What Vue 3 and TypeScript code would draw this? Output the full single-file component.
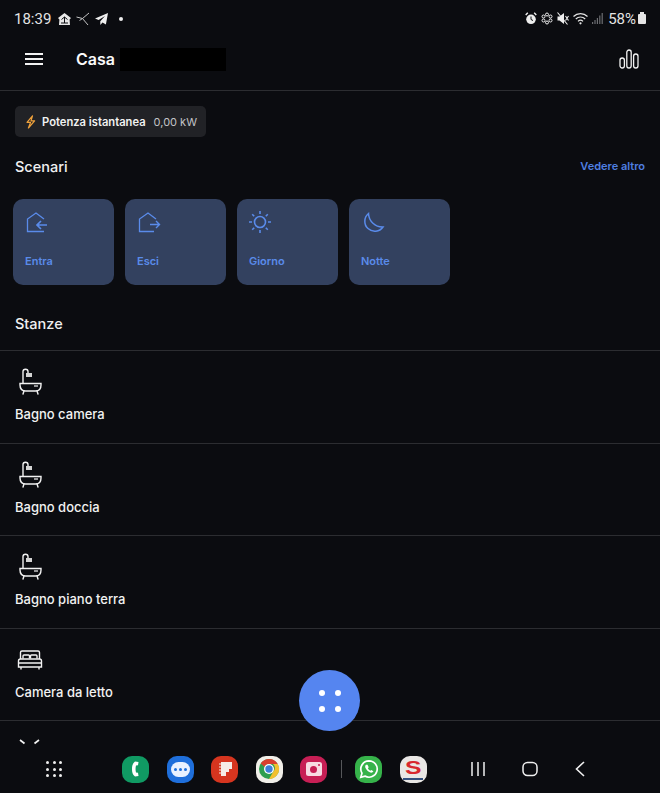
<script setup lang="ts">
const scenes: { label: string; icon: string }[] = [
  { label: 'Entra', icon: 'in' },
  { label: 'Esci', icon: 'out' },
  { label: 'Giorno', icon: 'sun' },
  { label: 'Notte', icon: 'moon' },
]
const rooms: { label: string; icon: string }[] = [
  { label: 'Bagno camera', icon: 'bath' },
  { label: 'Bagno doccia', icon: 'bath' },
  { label: 'Bagno piano terra', icon: 'bath' },
  { label: 'Camera da letto', icon: 'bed' },
  { label: '', icon: 'next' },
]
</script>

<template>
  <div class="screen">
    <div class="status">
      <div class="status-left">
        <span class="time">18:39</span>
        <svg class="si" width="15" height="14" viewBox="0 0 15 14"><path d="M7.500 1 14 6 12.600 7.500 13 13H2L2.400 7.500 1 6z" fill="#e8e8e8"/><path d="M4.500 7.500 7.500 5l3 2.500M4 11h7M7.500 5v6" stroke="#0b0c10" stroke-width="1" fill="none"/></svg>
        <svg class="si" width="14" height="14" viewBox="0 0 14 14" fill="none" stroke="#c4c4c4" stroke-width="1"><path d="M0.500 5 6.500 6.500 3.500 8.500M13 1 6.500 6.500 12 13"/></svg>
        <svg class="si" width="15" height="14" viewBox="0 0 15 14"><path d="M14 1 1 6.500l3.600 1.500L11 4 6.300 9.300V13l2.200-2.500 3.400 2z" fill="#efefef"/></svg>
        <span class="dot"></span>
      </div>
      <div class="status-right">
        <svg width="12" height="13" viewBox="0 0 12 13"><circle cx="6" cy="7.300" r="4.800" fill="#eee"/><path d="M.7 3 2.800.8M11.300 3 9.200.8" stroke="#eee" stroke-width="1.400"/><path d="M6 4.500V7.500l2 1" stroke="#0b0c10" stroke-width="1" fill="none"/></svg>
        <svg width="12" height="13" viewBox="0 0 12 13" fill="none" stroke="#eee"><circle cx="6" cy="2.500" r="1.500"/><circle cx="6" cy="10.500" r="1.500"/><circle cx="2.500" cy="4.500" r="1.500"/><circle cx="9.500" cy="4.500" r="1.500"/><circle cx="2.500" cy="8.500" r="1.500"/><circle cx="9.500" cy="8.500" r="1.500"/></svg>
        <svg width="12" height="13" viewBox="0 0 12 13"><path d="M.5 4.500h2L7 1v11L2.500 8.500h-2z" fill="#eee"/><path d="M8.500 4l3 4.500M11.500 4l-3 4.500M.5.500l10 12" stroke="#eee" stroke-width="1.100" fill="none"/></svg>
        <svg class="wifi" width="15" height="13" viewBox="0 0 15 13" fill="none" stroke="#e6e6e6" stroke-width="1.200"><path d="M.5 4.500C4.300.7 10.700.7 14.500 4.500M2.800 7C5.500 4.300 9.500 4.300 12.200 7M5 9.300c1.500-1.500 3.500-1.500 5 0"/><circle cx="7.500" cy="11.300" r="1.100" fill="#e6e6e6" stroke="none"/></svg>
        <svg class="signal" width="11" height="11" viewBox="0 0 11 11" fill="#6d6e72"><rect x="0" y="9" width="1.200" height="2"/><rect x="2.400" y="7" width="1.200" height="4"/><rect x="4.800" y="5" width="1.200" height="6"/><rect x="7.200" y="2.500" width="1.200" height="8.500"/><rect x="9.600" y="0" width="1.200" height="11"/></svg>
        <span class="pct">58%</span>
        <span class="batt"></span>
      </div>
    </div>

    <header class="topbar">
      <div class="burger"><i></i><i></i><i></i></div>
      <h1 class="home">Casa</h1>
      <div class="redact"></div>
      <svg class="chart" width="20" height="20" viewBox="0 0 20 20" fill="none" stroke="#f2f2f2" stroke-width="1.300"><rect x="1" y="9" width="4.400" height="10" rx="2.200"/><rect x="7.800" y="1" width="4.400" height="18" rx="2.200"/><rect x="14.600" y="5" width="4.400" height="14" rx="2.200"/></svg>
    </header>

    <main class="content">
      <div class="chip">
        <svg class="bolt" width="11" height="14" viewBox="0 0 11 14"><path d="M7.500.8 2 7.400h3.600L3.400 13 9.600 5.800H6z" fill="none" stroke="#f0a23c" stroke-width="1.200" stroke-linejoin="round"/></svg>
        <span class="chip-name">Potenza istantanea</span>
        <span class="chip-value">0,00 kW</span>
      </div>

      <div class="section-head">
        <h2>Scenari</h2>
        <span class="more">Vedere altro</span>
      </div>

      <div class="scenes">
        <div v-for="s in scenes" :key="s.label" class="scene">
          <svg class="scene-icon" width="26" height="26" viewBox="0 0 26 26" fill="none" stroke="#5a8bea" stroke-width="1.300">
            <template v-if="s.icon === 'in'">
              <path d="M20 9 12 3 3.500 9V21.500H20"/>
              <path d="M23 15H13M17 11l-4 4 4 4" stroke-width="1.700"/>
            </template>
            <template v-else-if="s.icon === 'out'">
              <path d="M20 9 12 3 3.500 9V21.500H18"/>
              <path d="M14 14.500h9.500M20 11l3.500 3.500L20 18" stroke-width="1.400"/>
            </template>
            <template v-else-if="s.icon === 'sun'">
              <circle cx="12" cy="12" r="5.500" stroke-width="1.600"/>
              <path d="M12 1v3M12 20v3M1 12h3M20 12h3M4.200 4.200l2 2M17.800 17.800l2 2M19.800 4.200l-2 2M6.200 17.800l-2 2" stroke-width="1.600"/>
            </template>
            <template v-else>
              <path d="M8.500 3.500A10 10 0 1 0 23 17 14 14 0 0 1 8.500 3.500z" stroke-width="1.500"/>
            </template>
          </svg>
          <span class="scene-label">{{ s.label }}</span>
        </div>
      </div>

      <h2 class="rooms-title">Stanze</h2>

      <div class="rooms">
        <div v-for="(r, i) in rooms" :key="i" class="room">
          <svg class="room-icon" width="28" height="27" viewBox="0 0 28 27" fill="none" stroke="#f2f2f2" stroke-width="1.400">
            <template v-if="r.icon === 'bath'">
              <path d="M6 15V3.500C6 2 7 1.300 8.500 1.300S11 2 11 3.500V5"/>
              <path d="M9 5h6v4H9z" fill="#d4d4d4" stroke="none"/>
              <path d="M3 15.500h21v1.500c0 4-2.500 6-5.500 6h-10C5.500 23 3 21 3 17z"/>
              <path d="M7 23l-1 3M20 23l1 3" stroke-linecap="round"/>
              <path d="M17 18h4" stroke-width="1.200"/>
            </template>
            <template v-else-if="r.icon === 'bed'">
              <path d="M3.500 13V6.500c0-1 .6-1.500 1.500-1.500h16c.9 0 1.500.5 1.500 1.500V13"/>
              <path d="M6 12.500V10c0-.6.4-1 1-1h4.500c.6 0 1 .4 1 1v2.500M13.500 12.500V10c0-.6.4-1 1-1H19c.6 0 1 .4 1 1v2.500"/>
              <path d="M1.500 21v-6c0-1.300.7-2 2-2h19c1.300 0 2 .7 2 2v6zM1.500 17h23M4 21v2.500M22 21v2.500"/>
            </template>
            <template v-else>
              <path d="M3 2l4.500 3.500M22 2l-4.500 3.500" stroke-width="1.700"/>
            </template>
          </svg>
          <span class="room-label">{{ r.label }}</span>
        </div>
      </div>
    </main>

    <button class="fab" type="button" aria-label="Menu">
      <i></i><i></i><i></i><i></i>
    </button>

    <footer class="dock">
      <div class="apps-grid"><i v-for="n in 9" :key="n"></i></div>
      <div class="apps">
        <span class="app phone">
          <svg width="16" height="20" viewBox="0 0 16 20"><path d="M7 2.500c-2.500 2-3 4.500-3 7.500s.5 5.500 3 7.500l3.500-.5-.5-3.200-2-.3c-.6-2.300-.6-4.700 0-7l2-.3.500-3.200z" fill="#fff"/></svg>
        </span>
        <span class="app chat">
          <span class="bubble"><i></i><i></i><i></i></span>
        </span>
        <span class="app notes">
          <svg width="20" height="20" viewBox="0 0 20 20"><path d="M6 3h11v7h-3v3h-3v4H6z" fill="#f6ece6"/><path d="M4 5h3M4 8h3M4 11h3M4 14h3" stroke="#f6ece6" stroke-width="1.200"/></svg>
        </span>
        <span class="app chrome">
          <svg width="22" height="22" viewBox="0 0 22 22"><circle cx="11" cy="11" r="10" fill="#2f9e4f"/><path d="M11 1a10 10 0 0 1 8.700 5H11a5 5 0 0 0-4.500 2.800L2.700 5.500A10 10 0 0 1 11 1z" fill="#d9402f"/><path d="M19.700 6A10 10 0 0 1 11 21l4.200-7.300A5 5 0 0 0 15 6z" fill="#f2c02e"/><circle cx="11" cy="11" r="5" fill="#fff"/><circle cx="11" cy="11" r="3.700" fill="#3d7fd9"/></svg>
        </span>
        <span class="app camera">
          <svg width="18" height="16" viewBox="0 0 18 16"><rect x="1" y="1" width="16" height="14" rx="2.500" fill="#f7dbe3"/><circle cx="8.500" cy="8.500" r="3.500" fill="#c71f55"/><circle cx="14" cy="4" r="1" fill="#c71f55"/></svg>
        </span>
        <span class="sep"></span>
        <span class="app whatsapp">
          <svg width="20" height="20" viewBox="0 0 20 20"><path d="M10 1.800a8.200 8.200 0 0 0-7 12.400L1.800 18.200l4.100-1.100A8.200 8.200 0 1 0 10 1.800z" fill="none" stroke="#fff" stroke-width="1.700"/><path d="M7 5.800c-1 .9-1.100 2.300-.2 3.800 1 1.800 2.600 3.300 4.500 3.900 1.400.4 2.600-.1 3.100-1.300l-2.100-1.300-1 .9c-1-.5-1.900-1.400-2.400-2.500l.8-1-1.200-2.500z" fill="#fff"/></svg>
        </span>
        <span class="app sapp">
          <span class="s-mark">S</span>
          <span class="s-base"></span>
        </span>
      </div>
      <div class="nav">
        <svg width="16" height="16" viewBox="0 0 16 16" stroke="#f0f0f0" stroke-width="1.500"><path d="M2 1v14M8 1v14M14 1v14"/></svg>
        <svg width="16" height="16" viewBox="0 0 16 16" fill="none" stroke="#f0f0f0" stroke-width="1.500"><rect x="1" y="1.500" width="14" height="13" rx="4.500"/></svg>
        <svg width="12" height="16" viewBox="0 0 12 16" fill="none" stroke="#f0f0f0" stroke-width="1.600"><path d="M10 1 2.500 8l7.500 7"/></svg>
      </div>
    </footer>
  </div>
</template>

<style>
html, body { margin: 0; background: #0b0c10; }
</style>

<style scoped>
.screen {
  position: relative;
  width: 660px;
  height: 793px;
  overflow: hidden;
  display: flex;
  flex-direction: column;
  background: #0b0c10;
  color: #f4f4f4;
  font-family: Inter, "Liberation Sans", sans-serif;
}
.status {
  height: 37px;
  flex: none;
  display: flex;
  justify-content: space-between;
  align-items: center;
  padding: 0 14px 0 14px;
  box-sizing: border-box;
  font-family: Roboto, sans-serif;
  color: #e4e4e4;
}
.status-left, .status-right { display: flex; align-items: center; }
.status-left { gap: 3px; }
.status-right { gap: 4px; }
.time { font-size: 15px; margin-right: 3px; }
.si { margin-right: 1px; }
.dot { width: 4px; height: 4px; border-radius: 50%; background: #eee; margin-left: 6px; }
.pct { font-size: 15px; margin-left: 1px; }
.batt { width: 8px; height: 10px; margin-left: -2px; margin-top: 1px; background: #e6e6e6; border-radius: 1px; position: relative; }
.batt::before { content: ""; position: absolute; left: 2px; top: -2px; width: 4px; height: 2px; background: #e6e6e6; }
.topbar {
  height: 54px;
  flex: none;
  display: flex;
  align-items: center;
  padding: 0 21px 9px 25px;
  border-bottom: 1px solid #2c2d31;
  box-sizing: border-box;
}
.burger { width: 18px; display: flex; flex-direction: column; gap: 3px; margin-right: 33px; }
.burger i { display: block; height: 2px; background: #f2f2f2; }
.home { font-size: 16px; font-weight: 600; margin: 0 5px 0 0; color: #fafafa; }
.redact { width: 106px; height: 23px; background: #000; }
.chart { margin-left: auto; }
.content { flex: 1; min-height: 0; overflow: hidden; }
.chip {
  display: flex;
  align-items: center;
  height: 31px;
  margin: 15px 0 0 15px;
  padding: 0 9px 0 10px;
  width: 191px;
  box-sizing: border-box;
  background: #212226;
  border-radius: 5px;
  font-size: 11.200px;
  white-space: nowrap;
}
.bolt { flex: none; }
.chip-name { font-weight: 600; margin-left: 6px; color: #f2f2f2; }
.chip-value { margin-left: auto; color: #c2c3c6; font-size: 11px; }
.section-head {
  display: flex;
  justify-content: space-between;
  align-items: center;
  padding: 0 15px;
  margin-top: 18px;
  height: 22px;
}
h2 { font-size: 14.500px; font-weight: 500; margin: 0; color: #f0f0f0; }
.more { font-size: 11px; font-weight: 600; color: #4f7fe0; }
.scenes { display: flex; gap: 11px; padding-left: 13px; margin-top: 22px; }
.scene {
  width: 101px;
  height: 86px;
  box-sizing: border-box;
  padding: 11px 12px 0;
  border-radius: 10px;
  background: #33415f;
  display: flex;
  flex-direction: column;
}
.scene-icon { flex: none; margin-left: -1px; }
.scene-label { margin-top: 18px; font-size: 11px; font-weight: 600; color: #5a8bea; }
.rooms-title { margin: 29px 0 0 15px; height: 20px; line-height: 20px; }
.rooms { margin-top: 16px; }
.room {
  height: 92.600px;
  box-sizing: border-box;
  border-top: 1px solid #2c2d31;
  padding: 17px 15px 0;
}
.room-icon { display: block; margin-left: 2px; }
.room-label { display: block; margin-top: 11px; font-size: 13px; font-weight: 500; color: #f2f2f2; }
.fab {
  position: absolute;
  left: 299px;
  top: 670px;
  width: 61px;
  height: 61px;
  border: 0;
  padding: 16px;
  border-radius: 50%;
  background: #5585f0;
  display: grid;
  grid-template-columns: 6px 6px;
  gap: 10px;
  justify-content: center;
  align-content: center;
}
.fab i { width: 6px; height: 6px; border-radius: 50%; background: #fff; }
.dock {
  height: 47px;
  flex: none;
  display: flex;
  align-items: center;
  background: #0b0c10;
  padding-left: 46px;
  padding-bottom: 1px;
  box-sizing: border-box;
}
.apps-grid { display: grid; grid-template-columns: repeat(3, 3px); gap: 3.500px; margin-right: 60px; }
.apps-grid i { width: 3px; height: 3px; border-radius: 50%; background: #eee; }
.apps { display: flex; align-items: center; gap: 17.500px; }
.app {
  width: 27px;
  height: 27px;
  border-radius: 10px;
  display: flex;
  align-items: center;
  justify-content: center;
  position: relative;
}
.phone { background: #109a63; }
.chat { background: #1f6fdb; }
.bubble {
  width: 19px;
  height: 15px;
  background: #eaf2ff;
  border-radius: 8px;
  display: flex;
  align-items: center;
  justify-content: center;
  gap: 2px;
}
.bubble i { width: 3px; height: 3px; border-radius: 50%; background: #1f6fdb; }
.notes { background: #d6351f; }
.chrome { background: #f1efe9; }
.camera { background: #c71f55; }
.sep { width: 1px; height: 18px; background: #56575a; margin: 0 -4px 0 -4px; }
.whatsapp { background: #36b34a; }
.sapp { background: #e9e7e5; flex-direction: column; }
.s-mark {
  font-family: "Liberation Sans", sans-serif;
  font-size: 19px;
  line-height: 17px;
  font-weight: 700;
  color: #d8282e;
  transform: scaleX(1.300);
}
.s-base { width: 20px; height: 2px; background: #34507e; margin-top: 2px; }
.nav { display: flex; align-items: center; margin-left: 43px; gap: 36px; }
</style>
